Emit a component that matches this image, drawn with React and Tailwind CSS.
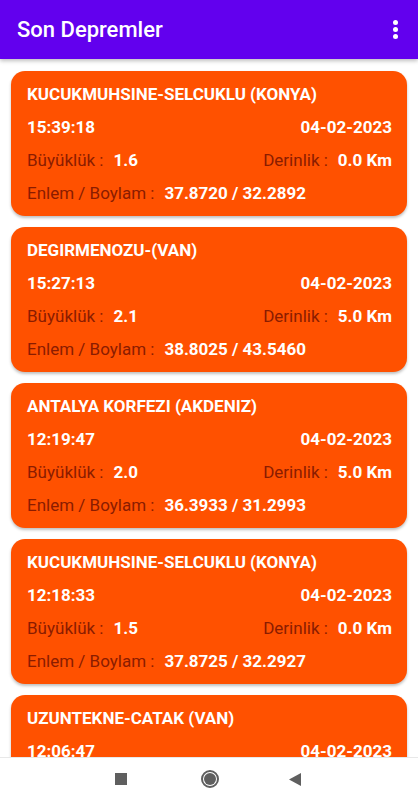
import React from "react";

const data = [
  { place: "KUCUKMUHSINE-SELCUKLU (KONYA)", time: "15:39:18", date: "04-02-2023", mag: "1.6", depth: "0.0 Km", coord: "37.8720 / 32.2892" },
  { place: "DEGIRMENOZU-(VAN)", time: "15:27:13", date: "04-02-2023", mag: "2.1", depth: "5.0 Km", coord: "38.8025 / 43.5460" },
  { place: "ANTALYA KORFEZI (AKDENIZ)", time: "12:19:47", date: "04-02-2023", mag: "2.0", depth: "5.0 Km", coord: "36.3933 / 31.2993" },
  { place: "KUCUKMUHSINE-SELCUKLU (KONYA)", time: "12:18:33", date: "04-02-2023", mag: "1.5", depth: "0.0 Km", coord: "37.8725 / 32.2927" },
  { place: "UZUNTEKNE-CATAK (VAN)", time: "12:06:47", date: "04-02-2023", mag: "1.9", depth: "7.0 Km", coord: "38.0000 / 43.0000" },
];

function Card({ d }) {
  return (
    <div className="shrink-0 mx-[11px] rounded-[14px] bg-[#ff5100] shadow-[0_2px_3px_rgba(0,0,0,0.25)] pl-[16px] pr-[15px] pt-[12px] pb-[10px] flex flex-col gap-[9px] text-[17px] text-white">
      <div className="h-[24px] flex items-center font-bold">{d.place}</div>
      <div className="h-[24px] flex items-center justify-between font-bold">
        <span>{d.time}</span>
        <span>{d.date}</span>
      </div>
      <div className="h-[24px] flex items-center justify-between">
        <div className="flex items-center gap-[10px]">
          <span className="text-[#8a1c00]">Büyüklük :</span>
          <span className="font-bold">{d.mag}</span>
        </div>
        <div className="flex items-center gap-[10px]">
          <span className="text-[#8a1c00]">Derinlik :</span>
          <span className="font-bold">{d.depth}</span>
        </div>
      </div>
      <div className="h-[24px] flex items-center gap-[10px]">
        <span className="text-[#8a1c00]">Enlem / Boylam :</span>
        <span className="font-bold">{d.coord}</span>
      </div>
    </div>
  );
}

export default function App() {
  return (
    <div className="w-[418px] h-[800px] flex flex-col bg-white overflow-hidden" style={{ fontFamily: "Roboto, 'Noto Sans', sans-serif" }}>
      <div className="relative z-10 h-[59px] shrink-0 bg-[#6200ee] flex items-center justify-between pl-[17px] pr-[20px] shadow-[0_2px_4px_rgba(0,0,0,0.25)]">
        <span className="text-white text-[22px] font-medium">Son Depremler</span>
        <div className="flex flex-col gap-[2px] items-center">
          <span className="w-[5px] h-[5px] rounded-full bg-white" />
          <span className="w-[5px] h-[5px] rounded-full bg-white" />
          <span className="w-[5px] h-[5px] rounded-full bg-white" />
        </div>
      </div>
      <div className="flex-1 min-h-0 overflow-hidden flex flex-col gap-[11px] pt-[12px]">
        {data.map((d, i) => (
          <Card key={i} d={d} />
        ))}
      </div>
      <div className="h-[43px] shrink-0 bg-white border-t border-[#e8e8e8] flex items-center justify-center">
        <div className="flex items-center">
          <span className="w-[12px] h-[12px] bg-[#5f5f5f] ml-[-2px]" />
          <span className="ml-[74px] w-[18px] h-[18px] rounded-full border-[2px] border-[#5f5f5f] flex items-center justify-center">
            <span className="w-[12px] h-[12px] rounded-full bg-[#5f5f5f]" />
          </span>
          <svg className="ml-[70px]" width="12" height="13" viewBox="0 0 12 13">
            <polygon points="12,0 12,13 0,6.5" fill="#5f5f5f" />
          </svg>
        </div>
      </div>
    </div>
  );
}
